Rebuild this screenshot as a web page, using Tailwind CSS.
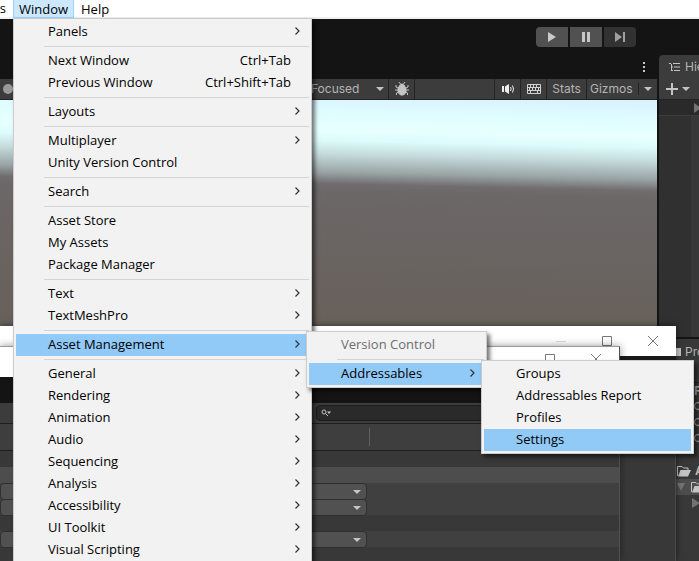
<!DOCTYPE html>
<html lang="en">
<head>
    <meta charset="UTF-8">
    <meta name="viewport" content="width=device-width, initial-scale=1.0">
    <title>Unity Editor</title>
    <script src="https://cdn.jsdelivr.net/npm/@tailwindcss/browser@4"></script>
</head>
<body class="bg-[#141414] font-['Open_Sans',sans-serif] text-[13px] text-black">
    <div class="relative h-screen overflow-hidden flex flex-col">
        <!-- Menu bar -->
        <nav class="flex h-[19px] shrink-0 bg-white border-b-2 border-[#f0f0f0] leading-4">
            <button class="w-[13px] shrink-0 overflow-hidden flex justify-end pr-[7px]">s</button>
            <button class="w-[61px] h-[18px] shrink-0 bg-[#cce8ff] border border-t-0 border-[#99d1ff]">Window</button>
            <button class="px-[7px]">Help</button>
        </nav>

        <!-- Editor -->
        <main class="flex-1 min-h-0 flex flex-col font-[Inter,sans-serif] text-[#b4b4b4]">
            <div class="flex-1 min-h-0 flex gap-0.5">
                <!-- Game view -->
                <section class="flex-1 min-w-0 flex flex-col">
                    <div class="h-9 shrink-0 flex justify-end items-start gap-0.5 pt-2 pr-[21px]">
                        <button aria-label="Play" class="w-8 h-5 rounded-l bg-[#515151] flex items-center justify-center">
                            <svg class="w-3 h-3" viewBox="0 0 12 12" fill="#c8c8c8"><path d="M2 1l8 5-8 5z"/></svg>
                        </button>
                        <button aria-label="Pause" class="w-8 h-5 bg-[#515151] flex items-center justify-center">
                            <svg class="w-3 h-3" viewBox="0 0 12 12" fill="#c8c8c8"><path d="M2 1h3v10H2zM7 1h3v10H7z"/></svg>
                        </button>
                        <button aria-label="Step" class="w-8 h-5 rounded-r bg-[#323232] flex items-center justify-center">
                            <svg class="w-3 h-3" viewBox="0 0 12 12" fill="#a0a0a0"><path d="M1 1l7 5-7 5zM9 1h2v10H9z"/></svg>
                        </button>
                    </div>
                    <div class="h-6 shrink-0 flex items-start justify-end pr-[7px] pt-[7px]">
                        <button aria-label="More" class="w-3 h-3"><svg class="w-3 h-3" viewBox="0 0 12 12" fill="#c8c8c8"><path d="M5 0h2v2H5zM5 4h2v2H5zM5 8h2v2H5z"/></svg></button>
                    </div>
                    <div class="h-[21px] shrink-0 flex bg-[#3c3c3c] border-b border-[#232323] text-[12px] leading-5">
                        <div class="w-[13px] shrink-0 flex items-center justify-end"><span class="w-2.5 h-2.5 rounded-full bg-[#999]"></span></div>
                        <button class="flex-1 min-w-0 flex items-center border-r border-[#232323] pl-[298px] pr-1">
                            <span class="flex-1 text-left">Focused</span>
                            <svg class="w-2 h-1" viewBox="0 0 8 4" fill="#c4c4c4"><path d="M0 0h8L4 4z"/></svg>
                        </button>
                        <button aria-label="Debug" class="w-[26px] shrink-0 flex items-center justify-center border-r border-[#232323]">
                            <svg class="w-3.5 h-3.5" viewBox="0 0 14 14"><path d="M4 0l1.500 2M10 0L8.500 2M1 3v2l3 1.500M13 3v2l-3 1.500M0 8h14M1.500 13v-2L4 9.500M12.500 13v-2L10 9.500" stroke="#c4c4c4" fill="none"/><path d="M4.500 3Q7 0 9.500 3 12.500 7 11 11 7 16.500 3 11 1.500 7 4.500 3z" fill="#c4c4c4"/></svg>
                        </button>
                        <span class="w-20 shrink-0 border-r border-[#232323]"></span>
                        <button aria-label="Mute" class="w-[26px] shrink-0 flex items-center justify-center border-r border-[#232323]">
                            <svg class="w-3.5 h-3" viewBox="0 0 14 12"><path d="M1 3h2v6H1zM4 3.500L8 1v10L4 8.500z" fill="#eee"/><path d="M9.500 4q1.300 2 0 4M11.500 2.500q2 3.500 0 7" stroke="#eee" fill="none"/></svg>
                        </button>
                        <button aria-label="Shortcuts" class="w-[26px] shrink-0 flex items-center justify-center border-r border-[#232323]">
                            <svg class="w-3.5 h-2.5" viewBox="0 0 14 10" stroke="#d2d2d2" fill="none"><path d="M.5.5h13v9H.5zM0 3.500h14M0 6.500h14M3.500 0v3.500M6.500 0v3.500M9.500 0v3.500M2.500 3.500v3M5.500 3.500v3M8.500 3.500v3M11.500 3.500v3M3.500 6.500v3M10.500 6.500v3"/></svg>
                        </button>
                        <button class="w-10 shrink-0 border-r border-[#232323]">Stats</button>
                        <div class="w-[52px] shrink-0 flex items-center justify-between pl-[3px]">
                            <button>Gizmos</button>
                            <span class="w-px h-3 bg-[#232323]"></span>
                        </div>
                        <button aria-label="Gizmo options" class="w-[18px] shrink-0 flex items-center justify-center"><svg class="w-2 h-1" viewBox="0 0 8 4" fill="#c4c4c4"><path d="M0 0h8L4 4z"/></svg></button>
                    </div>
                    <div class="flex-1 bg-[linear-gradient(181.3deg,#d8f1ff_0px,#e0feff_22px,#e8ffff_38px,#dcfbfc_48px,#c4d9da_62px,#98a2a3_80px,#716d6e_91px,#6c6768_98px,#67605a_240px)]"></div>
                </section>

                <!-- Hierarchy -->
                <aside class="w-10 shrink-0 flex flex-col overflow-hidden pt-9 text-[12px]">
                    <div class="h-6 shrink-0 bg-[#3c3c3c] rounded-tl flex items-center gap-1 pl-2.5 whitespace-nowrap">
                        <svg class="w-3 h-2.5 shrink-0" viewBox="0 0 12 10" stroke="#c4c4c4" fill="none"><path d="M0 1.500h2M4 1.500h7M2 5h2M5 5h6M2 8.500h2M5 8.500h6M2.500 2v7"/></svg>
                        <span>Hierarchy</span>
                    </div>
                    <div class="h-[21px] shrink-0 bg-[#3c3c3c] border-b border-[#232323] flex items-center gap-1 pl-[7px]">
                        <svg class="w-3 h-3 shrink-0" viewBox="0 0 12 12" fill="#c4c4c4"><path d="M5 0h2v5h5v2H7v5H5V7H0V5h5z"/></svg>
                        <svg class="w-2 h-1 shrink-0" viewBox="0 0 8 4" fill="#c4c4c4"><path d="M0 0h8L4 4z"/></svg>
                    </div>
                    <div class="h-4 shrink-0 bg-[#2a2a2a] border-b border-[#3c3c3c] flex items-center justify-end">
                        <svg class="w-[5px] h-2.5" viewBox="0 0 5 10" fill="#737373"><path d="M0 0l7 5-7 5z"/></svg>
                    </div>
                    <div class="flex-1 bg-[#383838]"><div class="w-8 h-full bg-[#303030]"></div></div>
                </aside>
            </div>

            <!-- Project -->
            <div class="h-56 shrink-0 flex justify-end border-t-2 border-[#141414] text-[12px]">
                <section class="w-10 overflow-hidden bg-[#383838] pl-[17px] whitespace-nowrap">
                    <div class="h-6 flex items-center gap-1 pt-0.5"><span class="w-[5px] h-2 shrink-0 bg-[#c4c4c4]"></span><span>Project</span></div>
                    <div class="h-5 border-b border-[#232323]"></div>
                    <div class="h-4 leading-4 pl-[18px] font-bold">Favorites</div>
                    <div class="h-16 flex flex-col pl-[18px]">
                        <svg class="w-3 h-4" viewBox="0 0 12 16" stroke="#c4c4c4" fill="none"><circle cx="4" cy="7" r="3.500"/><path d="M6 10l4 3"/></svg>
                        <svg class="w-3 h-4" viewBox="0 0 12 16" stroke="#c4c4c4" fill="none"><circle cx="4" cy="7" r="3.500"/><path d="M6 10l4 3"/></svg>
                        <svg class="w-3 h-4" viewBox="0 0 12 16" stroke="#c4c4c4" fill="none"><circle cx="4" cy="7" r="3.500"/><path d="M6 10l4 3"/></svg>
                    </div>
                    <div class="h-4 flex items-center gap-1 pl-px font-bold leading-4">
                        <svg class="w-3.5 h-3 shrink-0" viewBox="0 0 14 12"><path d="M.5 11V1.500H5L6.500 3H11v2" stroke="#c4c4c4" fill="none"/><path d="M3.500 5H14l-3 6.500H1z" fill="#c4c4c4"/></svg>
                        <span>Assets</span>
                    </div>
                    <div class="h-4 flex items-center gap-1.5 pl-px bg-[#4d4d4d]">
                        <svg class="w-2 h-2 shrink-0" viewBox="0 0 8 8" fill="#737373"><path d="M0 0h8L4 8z"/></svg>
                        <svg class="w-3.5 h-3 shrink-0" viewBox="0 0 14 12"><path d="M.5 11V1.500H5L6.500 3H11v2" stroke="#c4c4c4" fill="none"/><path d="M3.500 5H14l-3 6.500H1z" fill="#c4c4c4"/></svg>
                    </div>
                    <div class="h-4 flex items-center pl-4">
                        <svg class="w-2 h-2.5 shrink-0" viewBox="0 0 8 10" fill="#737373"><path d="M0 0l8 5-8 5z"/></svg>
                    </div>
                </section>
            </div>
        </main>

        <!-- Back floating window -->
        <div class="absolute left-0 right-[23px] top-[326px] bottom-0 flex flex-col shadow-[0_0_6px_#0008]">
            <div class="h-[30px] shrink-0 bg-white flex items-center justify-end">
                <button aria-label="Minimize" class="w-[46px] h-full flex items-center justify-center"><svg class="w-2.5 h-2.5" viewBox="0 0 10 10" stroke="#ddd"><path d="M0 5.500h10"/></svg></button>
                <button aria-label="Maximize" class="w-[46px] h-full flex items-center justify-center"><svg class="w-2.5 h-2.5" viewBox="0 0 10 10" stroke="#777" fill="none"><path d="M.5.5h9v9h-9z"/></svg></button>
                <button aria-label="Close" class="w-[46px] h-full flex items-center justify-center"><svg class="w-2.5 h-2.5" viewBox="0 0 10 10" stroke="#777"><path d="M0 0l10 10M10 0L0 10"/></svg></button>
            </div>
            <div class="h-6 shrink-0 bg-[#191919]"></div>
            <div class="flex-1 bg-[#383838] border-r border-[#4a4a4a]"></div>
        </div>

        <!-- Front floating window -->
        <div class="absolute left-0 right-[79px] top-[346px] bottom-0 flex flex-col bg-[#383838] border-t border-r border-t-[#999] border-r-[#505050] shadow-[0_0_8px_#0006]">
            <div class="h-[30px] shrink-0 bg-white flex justify-end">
                <button aria-label="Maximize" class="w-[46px] h-6 flex items-center justify-center"><svg class="w-2.5 h-2.5" viewBox="0 0 10 10" stroke="#777" fill="none"><path d="M.5.5h9v9h-9z"/></svg></button>
                <button aria-label="Close" class="w-[46px] h-6 flex items-center justify-center"><svg class="w-2.5 h-2.5" viewBox="0 0 10 10" stroke="#777"><path d="M0 0l10 10M10 0L0 10"/></svg></button>
            </div>
            <div class="h-[26px] shrink-0 bg-[#141414]"></div>
            <div class="h-[21px] shrink-0 bg-[#3c3c3c] border-b border-[#1e1e1e] flex items-center pl-[316px] pr-2">
                <label class="flex-1 h-4 bg-[#2a2a2a] border border-[#1c1c1c] rounded flex items-center pl-1">
                    <svg class="w-2.5 h-2" viewBox="0 0 10 8" stroke="#c4c4c4" fill="none"><circle cx="3" cy="3" r="2"/><path d="M4.500 4.500L7 7"/><path d="M6 2.500h4L8 5z" fill="#c4c4c4" stroke="none"/></svg>
                    <input type="text" aria-label="Search" class="flex-1 bg-transparent outline-none text-[11px] text-[#c4c4c4]">
                </label>
            </div>
            <div class="h-[27px] shrink-0 bg-[#3e3e3e] border-b border-[#1e1e1e] pl-[369px] py-1"><div class="w-px h-full bg-[#606060]"></div></div>
            <div class="h-4 shrink-0"></div>
            <div class="h-4 shrink-0 bg-[#4d4d4d]"></div>
            <div class="h-4 shrink-0 bg-[#404040]"><button aria-label="Profile" class="w-[367px] h-[17px] rounded bg-[#515151] border border-[#303030] flex items-center justify-end pr-[5px] pt-px"><svg class="w-2 h-1" viewBox="0 0 8 4" fill="#c4c4c4"><path d="M0 0h8L4 4z"/></svg></button></div>
            <div class="h-4 shrink-0 bg-[#404040]"><button aria-label="Catalog" class="w-[367px] h-[17px] rounded bg-[#515151] border border-[#303030] flex items-center justify-end pr-[5px] pt-px"><svg class="w-2 h-1" viewBox="0 0 8 4" fill="#c4c4c4"><path d="M0 0h8L4 4z"/></svg></button></div>
            <div class="h-4 shrink-0"></div>
            <div class="h-4 shrink-0 bg-[#404040]"><button aria-label="Build path" class="w-[367px] h-[17px] rounded bg-[#515151] border border-[#303030] flex items-center justify-end pr-[5px] pt-px"><svg class="w-2 h-1" viewBox="0 0 8 4" fill="#c4c4c4"><path d="M0 0h8L4 4z"/></svg></button></div>
        </div>

        <!-- Window menu -->
        <div role="menu" class="absolute left-[13px] top-[18px] w-[299px] bg-[#f2f2f2] border border-[#ccc] p-0.5 flex flex-col leading-5 shadow-[3px_3px_4px_#0008]">
            <button role="menuitem" class="h-[22px] flex items-center justify-between pl-8 pr-2 pb-0.5">Panels<svg class="w-[7px] h-2" viewBox="0 0 7 8" fill="none" stroke="#333" stroke-width="1.2"><path d="M1.500.5L5 4 1.500 7.500"/></svg></button>
            <hr class="my-[3px] ml-7 border-[#d4d4d4]">
            <button role="menuitem" class="h-[22px] flex justify-between pl-8 pr-[18px] pb-0.5">Next Window<span>Ctrl+Tab</span></button>
            <button role="menuitem" class="h-[22px] flex justify-between pl-8 pr-[18px] pb-0.5">Previous Window<span>Ctrl+Shift+Tab</span></button>
            <hr class="my-[3px] ml-7 border-[#d4d4d4]">
            <button role="menuitem" class="h-[22px] flex items-center justify-between pl-8 pr-2 pb-0.5">Layouts<svg class="w-[7px] h-2" viewBox="0 0 7 8" fill="none" stroke="#333" stroke-width="1.2"><path d="M1.500.5L5 4 1.500 7.500"/></svg></button>
            <hr class="my-[3px] ml-7 border-[#d4d4d4]">
            <button role="menuitem" class="h-[22px] flex items-center justify-between pl-8 pr-2 pb-0.5">Multiplayer<svg class="w-[7px] h-2" viewBox="0 0 7 8" fill="none" stroke="#333" stroke-width="1.2"><path d="M1.500.5L5 4 1.500 7.500"/></svg></button>
            <button role="menuitem" class="h-[22px] pl-8 pb-0.5 text-left">Unity Version Control</button>
            <hr class="my-[3px] ml-7 border-[#d4d4d4]">
            <button role="menuitem" class="h-[22px] flex items-center justify-between pl-8 pr-2 pb-0.5">Search<svg class="w-[7px] h-2" viewBox="0 0 7 8" fill="none" stroke="#333" stroke-width="1.2"><path d="M1.500.5L5 4 1.500 7.500"/></svg></button>
            <hr class="my-[3px] ml-7 border-[#d4d4d4]">
            <button role="menuitem" class="h-[22px] pl-8 pb-0.5 text-left">Asset Store</button>
            <button role="menuitem" class="h-[22px] pl-8 pb-0.5 text-left">My Assets</button>
            <button role="menuitem" class="h-[22px] pl-8 pb-0.5 text-left">Package Manager</button>
            <hr class="my-[3px] ml-7 border-[#d4d4d4]">
            <button role="menuitem" class="h-[22px] flex items-center justify-between pl-8 pr-2 pb-0.5">Text<svg class="w-[7px] h-2" viewBox="0 0 7 8" fill="none" stroke="#333" stroke-width="1.2"><path d="M1.500.5L5 4 1.500 7.500"/></svg></button>
            <button role="menuitem" class="h-[22px] flex items-center justify-between pl-8 pr-2 pb-0.5">TextMeshPro<svg class="w-[7px] h-2" viewBox="0 0 7 8" fill="none" stroke="#333" stroke-width="1.2"><path d="M1.500.5L5 4 1.500 7.500"/></svg></button>
            <hr class="my-[3px] ml-7 border-[#d4d4d4]">
            <button role="menuitem" class="h-[22px] flex items-center justify-between pl-8 pr-2 pb-0.5 bg-[#91c9f7]">Asset Management<svg class="w-[7px] h-2" viewBox="0 0 7 8" fill="none" stroke="#333" stroke-width="1.2"><path d="M1.500.5L5 4 1.500 7.500"/></svg></button>
            <hr class="my-[3px] ml-7 border-[#d4d4d4]">
            <button role="menuitem" class="h-[22px] flex items-center justify-between pl-8 pr-2 pb-0.5">General<svg class="w-[7px] h-2" viewBox="0 0 7 8" fill="none" stroke="#333" stroke-width="1.2"><path d="M1.500.5L5 4 1.500 7.500"/></svg></button>
            <button role="menuitem" class="h-[22px] flex items-center justify-between pl-8 pr-2 pb-0.5">Rendering<svg class="w-[7px] h-2" viewBox="0 0 7 8" fill="none" stroke="#333" stroke-width="1.2"><path d="M1.500.5L5 4 1.500 7.500"/></svg></button>
            <button role="menuitem" class="h-[22px] flex items-center justify-between pl-8 pr-2 pb-0.5">Animation<svg class="w-[7px] h-2" viewBox="0 0 7 8" fill="none" stroke="#333" stroke-width="1.2"><path d="M1.500.5L5 4 1.500 7.500"/></svg></button>
            <button role="menuitem" class="h-[22px] flex items-center justify-between pl-8 pr-2 pb-0.5">Audio<svg class="w-[7px] h-2" viewBox="0 0 7 8" fill="none" stroke="#333" stroke-width="1.2"><path d="M1.500.5L5 4 1.500 7.500"/></svg></button>
            <button role="menuitem" class="h-[22px] flex items-center justify-between pl-8 pr-2 pb-0.5">Sequencing<svg class="w-[7px] h-2" viewBox="0 0 7 8" fill="none" stroke="#333" stroke-width="1.2"><path d="M1.500.5L5 4 1.500 7.500"/></svg></button>
            <button role="menuitem" class="h-[22px] flex items-center justify-between pl-8 pr-2 pb-0.5">Analysis<svg class="w-[7px] h-2" viewBox="0 0 7 8" fill="none" stroke="#333" stroke-width="1.2"><path d="M1.500.5L5 4 1.500 7.500"/></svg></button>
            <button role="menuitem" class="h-[22px] flex items-center justify-between pl-8 pr-2 pb-0.5">Accessibility<svg class="w-[7px] h-2" viewBox="0 0 7 8" fill="none" stroke="#333" stroke-width="1.2"><path d="M1.500.5L5 4 1.500 7.500"/></svg></button>
            <button role="menuitem" class="h-[22px] flex items-center justify-between pl-8 pr-2 pb-0.5">UI Toolkit<svg class="w-[7px] h-2" viewBox="0 0 7 8" fill="none" stroke="#333" stroke-width="1.2"><path d="M1.500.5L5 4 1.500 7.500"/></svg></button>
            <button role="menuitem" class="h-[22px] flex items-center justify-between pl-8 pr-2 pb-0.5">Visual Scripting<svg class="w-[7px] h-2" viewBox="0 0 7 8" fill="none" stroke="#333" stroke-width="1.2"><path d="M1.500.5L5 4 1.500 7.500"/></svg></button>
        </div>

        <!-- Asset Management submenu -->
        <div role="menu" class="absolute left-[306px] top-[331px] w-[181px] bg-[#f2f2f2] border border-[#ccc] p-0.5 flex flex-col leading-5 shadow-[3px_3px_4px_#0008]">
            <button role="menuitem" disabled class="h-[22px] pl-8 pb-0.5 text-left text-[#6d6d6d]">Version Control</button>
            <hr class="my-[3px] ml-7 border-[#d4d4d4]">
            <button role="menuitem" class="h-[22px] flex items-center justify-between pl-8 pr-2 pb-0.5 bg-[#91c9f7]">Addressables<svg class="w-[7px] h-2" viewBox="0 0 7 8" fill="none" stroke="#333" stroke-width="1.2"><path d="M1.500.5L5 4 1.500 7.500"/></svg></button>
        </div>

        <!-- Addressables submenu -->
        <div role="menu" class="absolute left-[481px] top-[360px] w-[213px] bg-[#f2f2f2] border border-[#ccc] p-0.5 flex flex-col leading-5 shadow-[3px_3px_4px_#0008]">
            <button role="menuitem" class="h-[22px] pl-8 pb-0.5 text-left">Groups</button>
            <button role="menuitem" class="h-[22px] pl-8 pb-0.5 text-left">Addressables Report</button>
            <button role="menuitem" class="h-[22px] pl-8 pb-0.5 text-left">Profiles</button>
            <button role="menuitem" class="h-[22px] pl-8 pb-0.5 text-left bg-[#91c9f7]">Settings</button>
        </div>
    </div>
</body>
</html>
